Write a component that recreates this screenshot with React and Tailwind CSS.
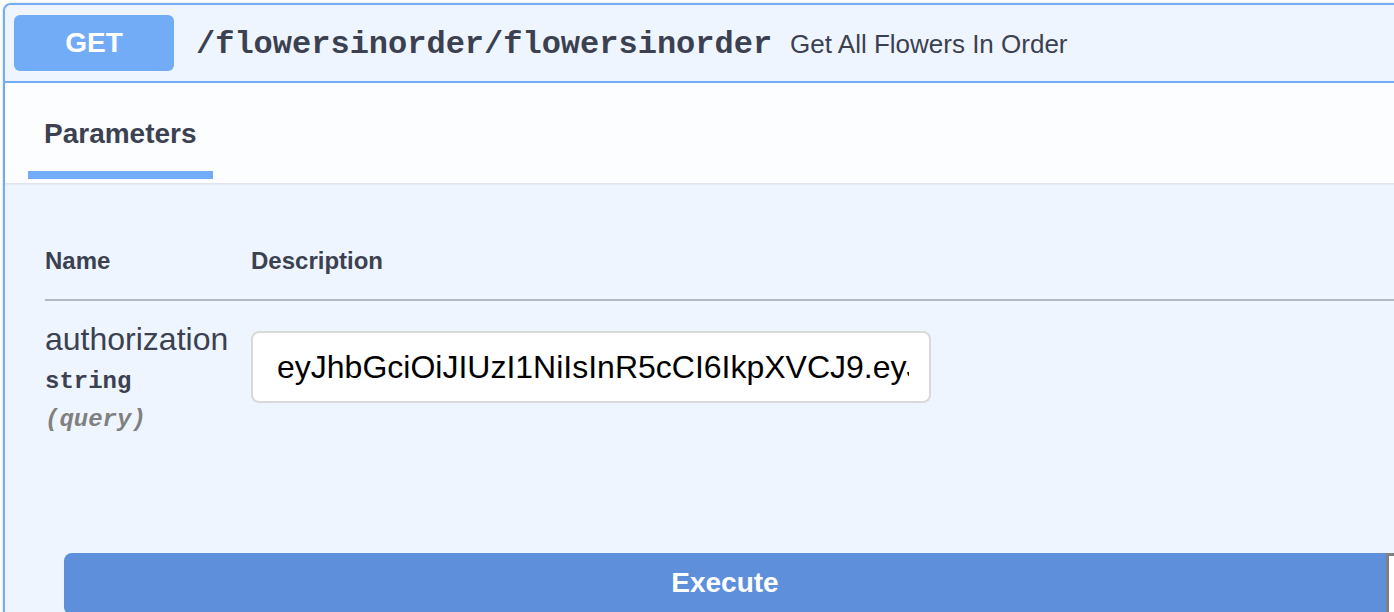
import React from "react";

const TOKEN =
  "eyJhbGciOiJIUzI1NiIsInR5cCI6IkpXVCJ9.eyJzdWIiOiIxMjM0NTY3ODkwIiwibmFtZSI6IkpvaG4gRG9lIiwiaWF0IjoxNTE2MjM5MDIyfQ";

export default function App() {
  return (
    <div className="w-[1394px] h-[612px] overflow-hidden bg-white font-['Liberation_Sans',Arial,sans-serif] text-[#3b4151]">
      <div className="ml-[3px] mt-[3px] w-[1500px] border-2 border-[#73acf6] rounded-t-[8px] bg-[#eff5fe] shadow-[0_0_3px_rgba(0,0,0,0.19)]">
        {/* Summary header */}
        <div className="flex items-center pl-[9px] py-[10px] border-b-2 border-[#73acf6] rounded-t-[6px] bg-[#eff5fe]">
          <div className="w-[160px] h-[56px] rounded-[6px] bg-[#73acf6] flex items-center justify-center text-white font-bold text-[28px] leading-none">
            GET
          </div>
          <div className="ml-[22px] mt-[3px] font-['Liberation_Mono','Courier_New',monospace] font-bold text-[32px] leading-[36px] text-[#3b4151]">
            /flowersinorder/flowersinorder
          </div>
          <div className="ml-[18px] mt-[2px] text-[26px] leading-[30px] text-[#3b4151]">
            Get All Flowers In Order
          </div>
        </div>

        {/* Tabs */}
        <div className="relative z-10 h-[100px] bg-[#fcfdff] shadow-[0_1px_2px_rgba(0,0,0,0.1)] flex items-end pb-[4px] pl-[23px]">
          <div className="px-[16px] pb-[21px] border-b-[8px] border-[#73acf6] text-[28px] leading-[32px] font-bold text-[#3b4151]">
            Parameters
          </div>
        </div>

        {/* Body */}
        <div className="bg-[#eff5fe] pt-[64px] pl-[40px]">
          <div className="flex border-b-2 border-[#b4b9c3] pb-[24px] text-[24px] leading-[28px] font-bold text-[#3b4151]">
            <div className="w-[206px]">Name</div>
            <div>Description</div>
          </div>

          <div className="flex pt-[20px]">
            <div className="w-[206px] shrink-0 flex flex-col">
              <div className="text-[32px] leading-[36px] text-[#3b4151]">authorization</div>
              <div className="mt-[11px] font-['Liberation_Mono','Courier_New',monospace] font-bold text-[24px] leading-[28px] text-[#3b4151]">
                string
              </div>
              <div className="mt-[10px] font-['Liberation_Mono','Courier_New',monospace] font-bold italic text-[24px] leading-[28px] text-[#808080]">
                (query)
              </div>
            </div>
            <div className="pt-[10px]">
              <input
                readOnly
                value={TOKEN}
                className="w-[680px] h-[72px] border-2 border-[#d9d9d9] rounded-[8px] bg-white pl-[24px] pr-[20px] text-[32px] text-black font-['Liberation_Sans',Arial,sans-serif] outline-none"
              />
            </div>
          </div>

          <div className="flex mt-[119px] ml-[19px]">
            <div className="w-[1322px] shrink-0 h-[62px] rounded-l-[8px] bg-[#5d8fda] flex items-center justify-center text-white font-bold text-[28px] leading-none pb-[2px]">
              Execute
            </div>
            <div className="w-[200px] shrink-0 h-[62px] border-[3px] border-[#808080] bg-white"></div>
          </div>
        </div>
      </div>
    </div>
  );
}
